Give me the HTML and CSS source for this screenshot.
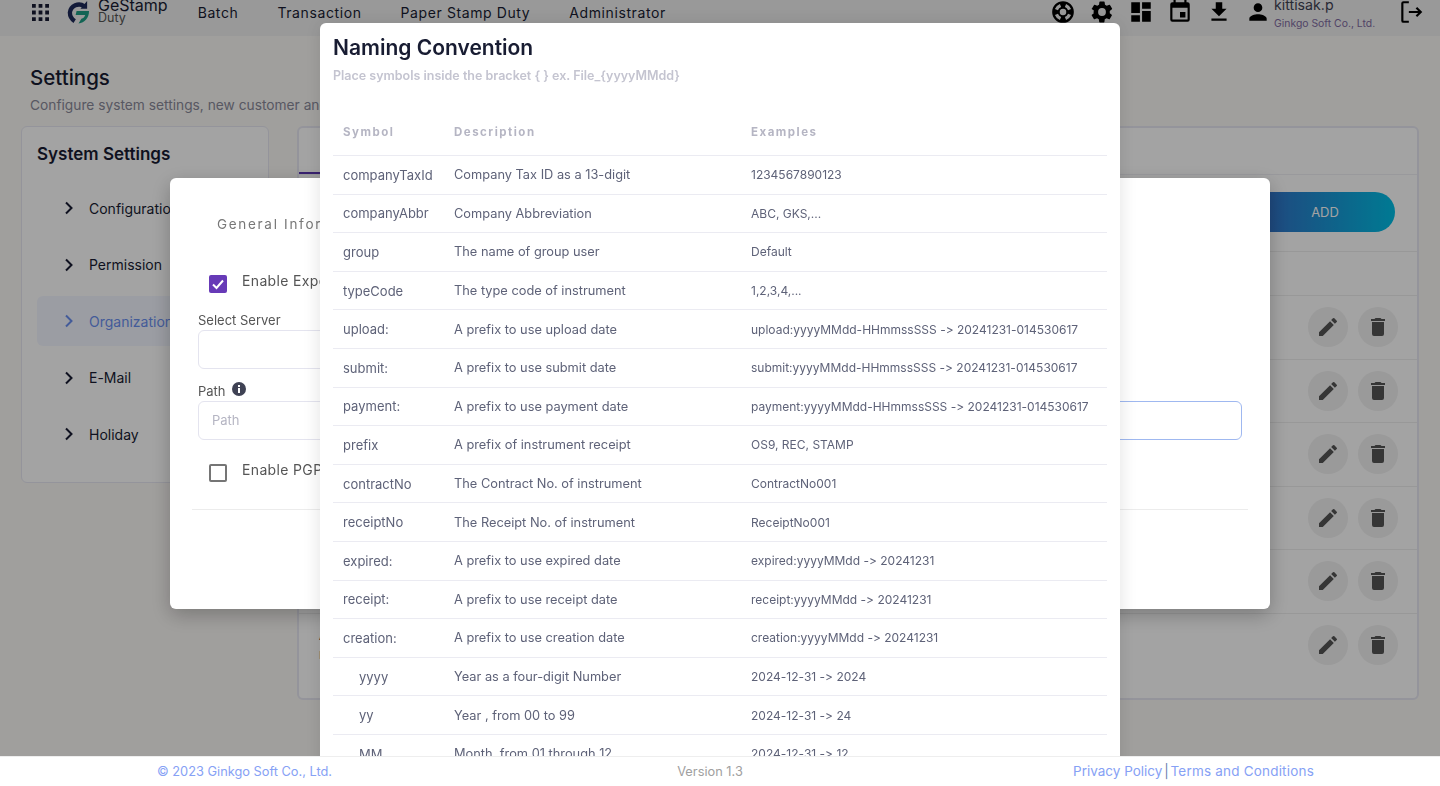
FILE: index.html
```html
<!DOCTYPE html>
<html lang="en">
<head>
  <meta charset="UTF-8">
  <title>Settings</title>
  <link rel="stylesheet" href="styles.css">
</head>
<body>
  <header class="topbar">
    <svg class="apps" viewBox="0 0 18 18"><path d="M0 0h4v4H0zM7 0h4v4H7zM14 0h4v4h-4zM0 7h4v4H0zM7 7h4v4H7zM14 7h4v4h-4zM0 14h4v4H0zM7 14h4v4H7zM14 14h4v4h-4z"/></svg>
    <div class="logo">
      <svg viewBox="0 0 24 24" width="23" height="23"><path d="M18 5.500A9.500 9.500 0 0 0 3 12c0 4 2 7 5 9" fill="none" stroke="#1e2a5a" stroke-width="4.500"/><path d="M21 0v8h-7z" fill="#1e2a5a"/><path d="M10 10.500h13c0 7-4.500 12.500-11 13l3-5c2-.5 3.500-2 4-4H9z" fill="#1f9d84"/></svg>
      <div class="logo-text"><span>GeStamp</span><small>Duty</small></div>
    </div>
    <nav class="menu">
      <a>Batch</a>
      <a>Transaction</a>
      <a>Paper Stamp Duty</a>
      <a>Administrator</a>
    </nav>
    <div class="tools">
      <svg class="tool" viewBox="0 0 24 24"><path d="M12 2a10 10 0 1 0 0 20 10 10 0 0 0 0-20zm7.460 7.120-2.780 1.150a4.980 4.980 0 0 0-2.950-2.940l1.150-2.780a8.030 8.030 0 0 1 4.580 4.570zM12 15a3 3 0 1 1 0-6 3 3 0 0 1 0 6zM9.130 4.540l1.170 2.780a5 5 0 0 0-2.980 2.970L4.540 9.130a8.010 8.010 0 0 1 4.590-4.590zM4.540 14.870l2.780-1.150a4.980 4.980 0 0 0 2.970 2.960l-1.170 2.780a8.010 8.010 0 0 1-4.580-4.590zm10.340 4.590-1.150-2.780a4.980 4.980 0 0 0 2.950-2.970l2.780 1.170a8.010 8.010 0 0 1-4.580 4.580z"/></svg>
      <svg class="tool" viewBox="0 0 24 24"><path d="M19.140 12.940c.04-.3.060-.61.060-.94 0-.32-.02-.64-.07-.94l2.030-1.580a.49.49 0 0 0 .12-.61l-1.920-3.320a.49.49 0 0 0-.59-.22l-2.390.96c-.5-.38-1.030-.7-1.620-.94l-.36-2.540a.48.48 0 0 0-.48-.41h-3.840a.47.470 0 0 0-.47.410l-.36 2.540c-.59.240-1.130.570-1.620.94l-2.390-.96a.48.480 0 0 0-.59.220L2.740 8.870c-.12.210-.8.470.12.610l2.030 1.580c-.5.300-.9.630-.9.940s.2.640.7.940l-2.030 1.580a.49.49 0 0 0-.12.610l1.920 3.320c.12.220.37.290.59.220l2.390-.96c.5.380 1.030.7 1.620.94l.36 2.540c.5.240.24.410.48.410h3.840c.24 0 .44-.17.470-.41l.36-2.540c.59-.24 1.130-.56 1.620-.94l2.390.96c.22.080.47 0 .59-.22l1.920-3.320c.12-.22.070-.47-.12-.61l-2.010-1.580zM12 15.600A3.610 3.610 0 0 1 8.400 12 3.610 3.610 0 0 1 12 8.400a3.610 3.610 0 0 1 3.600 3.600 3.610 3.610 0 0 1-3.600 3.600z"/></svg>
      <svg class="tool" viewBox="0 0 24 24"><path d="M3 13h8V3H3v10zm0 8h8v-6H3v6zm10 0h8V11h-8v10zm0-18v6h8V3h-8z"/></svg>
      <svg class="tool" viewBox="0 0 24 24"><path d="M17 12h-5v5h5v-5zM16 1v2H8V1H6v2H5a2 2 0 0 0-2 2v14a2 2 0 0 0 2 2h14a2 2 0 0 0 2-2V5a2 2 0 0 0-2-2h-1V1h-2zm3 18H5V8h14v11z"/></svg>
      <svg class="tool" viewBox="0 0 24 24"><path d="M19 9h-4V3H9v6H5l7 7 7-7zM5 18v2h14v-2H5z"/></svg>
      <svg class="tool" viewBox="0 0 24 24"><path d="M12 12a4 4 0 1 0 0-8 4 4 0 0 0 0 8zm0 2c-2.670 0-8 1.340-8 4v2h16v-2c0-2.660-5.330-4-8-4z"/></svg>
      <div class="user"><span>kittisak.p</span><small>Ginkgo Soft Co., Ltd.</small></div>
      <svg class="tool logout" viewBox="0 0 24 24"><path d="M10 3H5a1 1 0 0 0-1 1v16a1 1 0 0 0 1 1h5M10 12h11M17 8l4 4-4 4" fill="none" stroke="#000" stroke-width="2"/></svg>
    </div>
  </header>

  <main class="page">
    <h1>Settings</h1>
    <p class="sub">Configure system settings, new customer and more</p>
    <div class="columns">
      <aside class="card side">
        <h2>System Settings</h2>
        <ul>
          <li><svg class="chev" viewBox="0 0 10 14"><path d="M2 1.500 7.500 7 2 12.500"/></svg>Configuration</li>
          <li><svg class="chev" viewBox="0 0 10 14"><path d="M2 1.500 7.500 7 2 12.500"/></svg>Permission</li>
          <li class="active"><svg class="chev" viewBox="0 0 10 14"><path d="M2 1.500 7.500 7 2 12.500"/></svg>Organization</li>
          <li><svg class="chev" viewBox="0 0 10 14"><path d="M2 1.500 7.500 7 2 12.500"/></svg>E-Mail</li>
          <li><svg class="chev" viewBox="0 0 10 14"><path d="M2 1.500 7.500 7 2 12.500"/></svg>Holiday</li>
        </ul>
      </aside>
      <section class="card content">
        <div class="tabs"><span class="tab"></span></div>
        <div class="actions"><button class="add">ADD</button></div>
        <div class="row head"></div>
        <div class="row"><span class="row-btn"><svg viewBox="0 0 24 24"><use href="#pencil"/></svg></span><span class="row-btn"><svg viewBox="0 0 24 24"><use href="#bin"/></svg></span></div>
        <div class="row"><span class="row-btn"><svg viewBox="0 0 24 24"><use href="#pencil"/></svg></span><span class="row-btn"><svg viewBox="0 0 24 24"><use href="#bin"/></svg></span></div>
        <div class="row"><span class="row-btn"><svg viewBox="0 0 24 24"><use href="#pencil"/></svg></span><span class="row-btn"><svg viewBox="0 0 24 24"><use href="#bin"/></svg></span></div>
        <div class="row"><span class="row-btn"><svg viewBox="0 0 24 24"><use href="#pencil"/></svg></span><span class="row-btn"><svg viewBox="0 0 24 24"><use href="#bin"/></svg></span></div>
        <div class="row"><span class="row-btn"><svg viewBox="0 0 24 24"><use href="#pencil"/></svg></span><span class="row-btn"><svg viewBox="0 0 24 24"><use href="#bin"/></svg></span></div>
        <div class="row last">
          <div class="row-name"><b>Admin</b><small>Default</small></div>
          <span class="row-btn"><svg viewBox="0 0 24 24"><use href="#pencil"/></svg></span><span class="row-btn"><svg viewBox="0 0 24 24"><use href="#bin"/></svg></span>
        </div>
      </section>
    </div>
  </main>

  <svg class="defs" width="0" height="0">
    <symbol id="pencil" viewBox="0 0 24 24"><path d="M3 17.250V21h3.750L17.810 9.940l-3.750-3.750L3 17.250zM20.710 7.040a1 1 0 0 0 0-1.410l-2.340-2.340a1 1 0 0 0-1.410 0l-1.830 1.830 3.750 3.750 1.830-1.830z"/></symbol>
    <symbol id="bin" viewBox="0 0 24 24"><path d="M6 19a2 2 0 0 0 2 2h8a2 2 0 0 0 2-2V7H6v12zM19 4h-3.500l-1-1h-5l-1 1H5v2h14V4z"/></symbol>
  </svg>

  <div class="backdrop"></div>

  <div class="modal general">
    <h3>General Information</h3>
    <label class="check"><span class="box on"><svg viewBox="0 0 18 18"><path d="M4 9.500 7.500 13 14 5.500"/></svg></span>Enable Export</label>
    <div class="field">
      <label>Select Server</label>
      <div class="input half"></div>
    </div>
    <div class="field">
      <label>Path <svg class="info" viewBox="0 0 14 14"><circle cx="7" cy="7" r="7"/><path d="M6 6h2v5H6zM6 3h2v2H6z" fill="#fff"/></svg></label>
      <div class="input-row">
        <div class="input ph">Path</div>
        <div class="input focus"></div>
      </div>
    </div>
    <label class="check pgp"><span class="box"></span>Enable PGP</label>
    <hr>
  </div>

  <div class="modal naming">
    <h3>Naming Convention</h3>
    <p>Place symbols inside the bracket { } ex. File_{yyyyMMdd}</p>
    <table>
      <thead>
        <tr><th>Symbol</th><th>Description</th><th>Examples</th></tr>
      </thead>
      <tbody>
        <tr><td>companyTaxId</td><td>Company Tax ID as a 13-digit</td><td>1234567890123</td></tr>
        <tr><td>companyAbbr</td><td>Company Abbreviation</td><td>ABC, GKS,...</td></tr>
        <tr><td>group</td><td>The name of group user</td><td>Default</td></tr>
        <tr><td>typeCode</td><td>The type code of instrument</td><td>1,2,3,4,...</td></tr>
        <tr><td>upload:</td><td>A prefix to use upload date</td><td>upload:yyyyMMdd-HHmmssSSS -&gt; 20241231-014530617</td></tr>
        <tr><td>submit:</td><td>A prefix to use submit date</td><td>submit:yyyyMMdd-HHmmssSSS -&gt; 20241231-014530617</td></tr>
        <tr><td>payment:</td><td>A prefix to use payment date</td><td>payment:yyyyMMdd-HHmmssSSS -&gt; 20241231-014530617</td></tr>
        <tr><td>prefix</td><td>A prefix of instrument receipt</td><td>OS9, REC, STAMP</td></tr>
        <tr><td>contractNo</td><td>The Contract No. of instrument</td><td>ContractNo001</td></tr>
        <tr><td>receiptNo</td><td>The Receipt No. of instrument</td><td>ReceiptNo001</td></tr>
        <tr><td>expired:</td><td>A prefix to use expired date</td><td>expired:yyyyMMdd -&gt; 20241231</td></tr>
        <tr><td>receipt:</td><td>A prefix to use receipt date</td><td>receipt:yyyyMMdd -&gt; 20241231</td></tr>
        <tr><td>creation:</td><td>A prefix to use creation date</td><td>creation:yyyyMMdd -&gt; 20241231</td></tr>
        <tr><td class="indent">yyyy</td><td>Year as a four-digit Number</td><td>2024-12-31 -&gt; 2024</td></tr>
        <tr><td class="indent">yy</td><td>Year , from 00 to 99</td><td>2024-12-31 -&gt; 24</td></tr>
        <tr><td class="indent">MM</td><td>Month, from 01 through 12</td><td>2024-12-31 -&gt; 12</td></tr>
      </tbody>
    </table>
  </div>

  <footer class="footer">
    <span class="copy">© 2023 Ginkgo Soft Co., Ltd.</span>
    <span class="version">Version 1.3</span>
    <span class="links"><a>Privacy Policy</a> <b>|</b> <a>Terms and Conditions</a></span>
  </footer>
</body>
</html>
```

FILE: styles.css
```css
html, body {
  margin: 0;
  height: 786px;
  overflow: hidden;
}

body {
  font-family: "Inter", "Liberation Sans", sans-serif;
  font-variant-ligatures: none;
  font-feature-settings: "calt" 0;
  background-color: #fbf9f6;
  color: #3f4254;
  font-size: 13px;
}

/* top bar */
.topbar {
  height: 36px;
  box-sizing: border-box;
  display: flex;
  align-items: center;
  background-color: #f0f0f0;
  padding-left: 32px;
  padding-right: 16px;
  padding-bottom: 12px;
  overflow: hidden;
}

.apps {
  width: 17px;
  height: 17px;
  fill: #181c32;
}

.logo {
  display: flex;
  align-items: center;
  gap: 8px;
  margin-left: 18px;
}

.logo-text {
  margin-top: -4px;
}

.logo-text span {
  display: block;
  font-size: 16px;
  line-height: 15px;
  color: #181c32;
}

.logo-text small {
  display: block;
  font-size: 12.500px;
  line-height: 10px;
  color: #555;
}

.menu {
  display: flex;
  gap: 39px;
  margin-left: 30px;
  font-size: 14px;
  letter-spacing: 0.6px;
  color: #181c32;
}

.tools {
  margin-left: auto;
  display: flex;
  align-items: center;
  gap: 13px;
}

.tool {
  width: 26px;
  height: 26px;
  fill: #000;
}

.user {
  margin-left: -10px;
  width: 119px;
  margin-top: 10px;
}

.user span {
  display: block;
  font-size: 14.200px;
  line-height: 16px;
  margin-top: -6px;
  color: #3f4254;
}

.user small {
  display: block;
  font-size: 10.400px;
  line-height: 14px;
  margin-top: 4px;
  color: #7e6aa0;
}

.logout {
  margin-left: -8px;
}

/* settings page behind the dialogs */
.page {
  padding: 28px 21px 0;
}

.page h1 {
  margin: 0 0 0 9px;
  font-size: 20.500px;
  line-height: 28px;
  font-weight: 500;
  color: #181c32;
}

.sub {
  margin: 4px 0 0 9px;
  font-size: 13.750px;
  line-height: 18px;
  color: #8a8a9a;
}

.columns {
  display: flex;
  gap: 28px;
  margin-top: 12px;
  align-items: flex-start;
}

.card {
  background-color: #fff;
  border: 2px solid #e8e8f2;
  border-radius: 6px;
  box-sizing: border-box;
}

.side {
  width: 248px;
  height: 357px;
  padding: 15px 15px;
  border-width: 1px;
}

.side h2 {
  margin: 0;
  font-size: 17px;
  line-height: 24px;
  font-weight: 600;
  color: #181c32;
}

.side ul {
  list-style: none;
  margin: 17px 0 0;
  padding: 0;
}

.side li {
  height: 50px;
  margin-bottom: 6.500px;
  display: flex;
  align-items: center;
  gap: 15px;
  padding-left: 27px;
  border-radius: 6px;
  font-size: 14px;
  color: #181c32;
}

.side li.active {
  background-color: #f3f6ff;
  color: #6a8ff0;
}

.chev {
  width: 10px;
  height: 14px;
  fill: none;
  stroke: currentColor;
  stroke-width: 2;
}

.content {
  flex: 1;
  height: 574px;
}

.tabs {
  height: 46px;
  border-bottom: 1px solid #f0f0f5;
}

.tab {
  display: block;
  width: 100px;
  height: 46px;
  box-sizing: border-box;
  border-bottom: 2px solid #5a35b0;
}

.actions {
  height: 77px;
  display: flex;
  justify-content: flex-end;
  align-items: center;
  padding-right: 22px;
  padding-bottom: 3px;
  box-sizing: border-box;
  border-bottom: 1px solid #eee;
}

.add {
  width: 230px;
  height: 40px;
  border: 0;
  border-radius: 20px;
  color: #fff;
  font-size: 13px;
  font-family: inherit;
  background: linear-gradient(90deg, #5a35b0, #00bfe6);
  padding-left: 96px;
}

.row {
  height: 63.500px;
  display: flex;
  justify-content: flex-end;
  align-items: center;
  gap: 10px;
  padding-right: 19px;
  box-sizing: border-box;
  border-bottom: 1px solid #eee;
}

.row.head {
  height: 44px;
}

.row.last {
  border-bottom: 0;
}

.row-name {
  margin-right: auto;
  padding-left: 20px;
}

.row-name b {
  display: block;
  font-weight: 500;
  line-height: 20px;
  color: #181c32;
}

.row-name small {
  display: block;
  line-height: 18px;
  margin-top: 2px;
}

.row-btn {
  width: 40px;
  height: 40px;
  border-radius: 50%;
  background-color: #f1f1f1;
  display: flex;
  align-items: center;
  justify-content: center;
}

.row-btn svg {
  width: 24px;
  height: 24px;
  fill: #555;
}

.defs {
  position: absolute;
}

.backdrop {
  position: fixed;
  inset: 0;
  background-color: rgba(0, 0, 0, 0.36);
}

/* dialogs */
.modal {
  position: fixed;
  background-color: #fff;
  border-radius: 6px;
  box-sizing: border-box;
}

.general {
  left: 170px;
  top: 178px;
  width: 1100px;
  height: 431px;
  padding: 0 22px;
  box-shadow: 0 6px 20px rgba(0, 0, 0, 0.25);
}

.general h3 {
  margin: 37px 0 0 25px;
  font-size: 13.500px;
  line-height: 18px;
  font-weight: 400;
  letter-spacing: 1.700px;
  color: #777;
}

.check {
  display: flex;
  align-items: flex-start;
  gap: 15px;
  margin: 39px 0 0 17px;
  font-size: 14px;
  line-height: 18px;
  letter-spacing: 0.35px;
  color: #555;
}

.check.pgp {
  margin-top: 0;
}

.box {
  width: 18px;
  height: 18px;
  margin-top: 3px;
  border: 2px solid #757575;
  border-radius: 2px;
  box-sizing: border-box;
  flex: none;
}

.box.on {
  border: 0;
  background-color: #673ab7;
}

.box svg {
  display: block;
  fill: none;
  stroke: #fff;
  stroke-width: 2;
}

.field {
  margin: 0 6px;
}

.field label {
  display: flex;
  gap: 6px;
  font-size: 13px;
  line-height: 18px;
  color: #555;
}

.check + .field {
  margin-top: 18px;
}

.field + .field {
  margin-top: 13px;
}

.info {
  width: 14px;
  height: 14px;
  fill: #3f4254;
}

.input {
  height: 39px;
  border: 1px solid #e4e4ef;
  border-radius: 6px;
  box-sizing: border-box;
  margin-top: 1px;
}

.input.half {
  width: 50%;
}

.input-row {
  display: flex;
  gap: 20px;
  margin-bottom: 21px;
}

.input-row .input {
  flex: 1;
}

.input.ph {
  padding-left: 13px;
  line-height: 37px;
  color: #b5b5c3;
}

.input.focus {
  border-color: #9fb8f0;
}

.general hr {
  border: 0;
  border-top: 1px solid #ececec;
  margin: 27px 0 0;
}

.naming {
  left: 320px;
  top: 23px;
  width: 800px;
  height: 780px;
  padding: 0 13px;
  overflow: hidden;
  box-shadow: 0 0 18px rgba(0, 0, 0, 0.12);
}

.naming h3 {
  margin: 12px 0 0;
  font-size: 21px;
  line-height: 26px;
  font-weight: 600;
  color: #181c32;
}

.naming p {
  margin: 6px 0 0;
  font-size: 12.500px;
  line-height: 18px;
  font-weight: 600;
  color: #c4c4d0;
}

.naming table {
  width: 100%;
  border-collapse: collapse;
  margin-top: 23px;
  table-layout: fixed;
}

.naming th {
  height: 47px;
  padding: 0 10px;
  text-align: left;
  font-size: 11.500px;
  font-weight: 700;
  letter-spacing: 1.500px;
  color: #b5b5c3;
  border-bottom: 1px solid #ebebf2;
}

.naming th:nth-child(1) {
  width: 91px;
}

.naming th:nth-child(2) {
  width: 277px;
}

.naming td {
  height: 37.600px;
  padding: 0 10px;
  font-size: 12px;
  color: #5e6278;
  border-bottom: 1px solid #ebebf2;
  white-space: nowrap;
}

.naming td:nth-child(1) {
  font-size: 13px;
}

.naming td:nth-child(2) {
  font-size: 12.800px;
}

.naming td.indent {
  padding-left: 26px;
}

.footer {
  position: fixed;
  left: 0;
  right: 0;
  bottom: 0;
  height: 29px;
  display: grid;
  grid-template-columns: 433px 240px 1fr;
  align-items: center;
  padding: 0 126px 0 157px;
  background-color: #fff;
  border-top: 1px solid #eee;
  font-size: 12.800px;
  line-height: 16px;
  color: #86a1f5;
}

.version {
  text-align: center;
  color: #a0a0a0;
}

.links {
  text-align: right;
  font-size: 13.500px;
  margin-bottom: 2px;
}

.links a:last-child {
  letter-spacing: 0.2px;
}

.links b {
  font-weight: 400;
  color: #6b7fb0;
  margin: 0 -2px;
}
```
